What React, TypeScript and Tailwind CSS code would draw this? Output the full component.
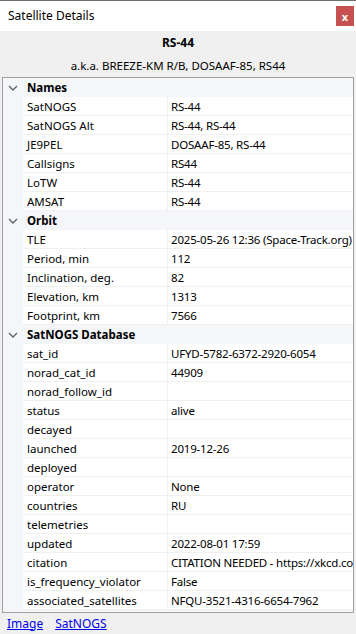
import React from "react";

type Row = [string, string];
const sections: { title: string; rows: Row[] }[] = [
  {
    title: "Names",
    rows: [
      ["SatNOGS", "RS-44"],
      ["SatNOGS Alt", "RS-44, RS-44"],
      ["JE9PEL", "DOSAAF-85, RS-44"],
      ["Callsigns", "RS44"],
      ["LoTW", "RS-44"],
      ["AMSAT", "RS-44"],
    ],
  },
  {
    title: "Orbit",
    rows: [
      ["TLE", "2025-05-26 12:36 (Space-Track.org)"],
      ["Period, min", "112"],
      ["Inclination, deg.", "82"],
      ["Elevation, km", "1313"],
      ["Footprint, km", "7566"],
    ],
  },
  {
    title: "SatNOGS Database",
    rows: [
      ["sat_id", "UFYD-5782-6372-2920-6054"],
      ["norad_cat_id", "44909"],
      ["norad_follow_id", ""],
      ["status", "alive"],
      ["decayed", ""],
      ["launched", "2019-12-26"],
      ["deployed", ""],
      ["operator", "None"],
      ["countries", "RU"],
      ["telemetries", ""],
      ["updated", "2022-08-01 17:59"],
      ["citation", "CITATION NEEDED - https://xkcd.com/285/"],
      ["is_frequency_violator", "False"],
      ["associated_satellites", "NFQU-3521-4316-6654-7962"],
    ],
  },
];

function Chevron() {
  return (
    <svg width="10" height="6" viewBox="0 0 10 6" className="block">
      <path d="M1 1 L5 5 L9 1" fill="none" stroke="#606060" strokeWidth="1.3" />
    </svg>
  );
}

export default function App() {
  return (
    <div
      className="w-[356px] h-[634px] bg-[#f0f0f0] flex flex-col overflow-hidden text-[11.5px] text-black"
      style={{ fontFamily: '"Noto Sans", "Open Sans", sans-serif' }}
    >
      <div className="h-[31px] shrink-0 bg-white border-t border-[#6e6e6e] flex items-center justify-between pl-[8px] pr-[2px]">
        <span className="leading-none text-[12px]">Satellite Details</span>
        <div className="w-[18px] h-[20px] bg-[#c75050] flex items-center justify-center text-white font-bold text-[11px] leading-none">
          x
        </div>
      </div>
      <div className="h-[23px] shrink-0 flex items-center justify-center font-bold text-[12px] pt-[1px]">RS-44</div>
      <div className="h-[23px] shrink-0 flex items-center justify-center pt-[1px]">
        a.k.a. BREEZE-KM R/B, DOSAAF-85, RS44
      </div>
      <div className="mx-[2px] h-[536px] shrink-0 border border-[#a0a0a0] bg-[#f4f6f9] overflow-hidden">
        {sections.map((s) => (
          <div key={s.title}>
            <div className="h-[19px] flex items-center pt-[1px]">
              <div className="w-[20px] flex justify-center">
                <Chevron />
              </div>
              <span className="font-bold pl-[4px] whitespace-nowrap">{s.title}</span>
            </div>
            {s.rows.map(([k, v]) => (
              <div key={k} className="h-[19px] flex ml-[20px] bg-white border-b border-[#f0f0f0]">
                <div className="w-[145px] shrink-0 border-r border-[#f0f0f0] pl-[4px] pt-[1px] flex items-center whitespace-nowrap">
                  {k}
                </div>
                <div className="flex-1 pl-[3px] pt-[1px] flex items-center whitespace-nowrap overflow-hidden tracking-[-0.2px]">
                  {v}
                </div>
              </div>
            ))}
          </div>
        ))}
      </div>
      <div className="flex-1 flex items-center gap-[12px] pl-[7px] text-[#0000ee] text-[12px]">
        <span className="underline">Image</span>
        <span className="underline">SatNOGS</span>
      </div>
    </div>
  );
}
